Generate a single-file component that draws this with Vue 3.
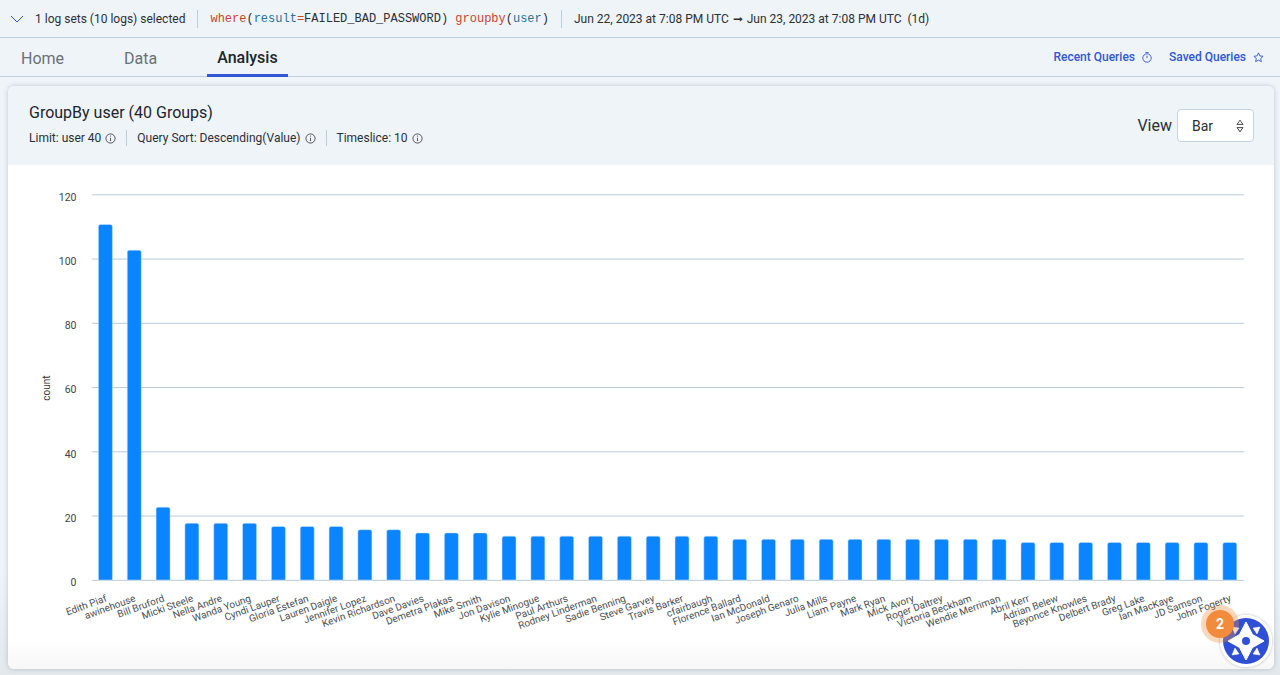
<template>
  <div class="page">
    <header class="query-bar">
      <svg class="chevron" width="14" height="8" viewBox="0 0 14 8"><path d="M1 1l6 6 6-6" fill="none" stroke="#3157d5" stroke-width="1" /></svg>
      <span class="selected">1 log sets (10 logs) selected</span>
      <span class="query"><span class="kw">where</span>(<span class="field">result</span><span class="kw">=</span>FAILED_BAD_PASSWORD) <span class="kw">groupby</span>(<span class="field">user</span>)</span>
      <span class="range">Jun 22, 2023 at 7:08 PM UTC <span class="arrow">➞</span> Jun 23, 2023 at 7:08 PM UTC&nbsp; (1d)</span>
    </header>

    <nav class="tabs">
      <a v-for="tab in tabs" :key="tab" class="tab" :class="{ active: tab === 'Analysis' }">{{ tab }}</a>
      <div class="links">
        <a class="link">
          Recent Queries
          <svg width="10" height="11" viewBox="0 0 10 11" fill="none" stroke="#3157d5" stroke-width="0.9">
            <circle cx="5" cy="6" r="4.2" />
            <path d="M3.4 0.6h3.2M5 3.6v2.6" />
          </svg>
        </a>
        <a class="link">
          Saved Queries
          <svg width="11" height="11" viewBox="0 0 11 11" fill="none" stroke="#3157d5" stroke-width="0.9">
            <path d="M5.5 0.9l1.4 3 3.2 0.4-2.4 2.2 0.7 3.2-2.9-1.6-2.9 1.6 0.7-3.2-2.4-2.2 3.2-0.4z" />
          </svg>
        </a>
      </div>
    </nav>

    <section class="card">
      <div class="card-head">
        <div>
          <h2 class="title">GroupBy user (40 Groups)</h2>
          <div class="meta">
            <span v-for="item in meta" :key="item" class="meta-item">
              {{ item }}
              <svg width="11" height="11" viewBox="0 0 11 11" fill="none" stroke="#333" stroke-width="0.8">
                <circle cx="5.500" cy="5.500" r="4.600" />
                <path d="M5.500 4.800v3.400M5.500 2.600v1.100" />
              </svg>
            </span>
          </div>
        </div>
        <div class="view">
          <span class="view-label">View</span>
          <div class="select">
            Bar
            <svg width="8" height="14" viewBox="0 0 8 14" fill="none" stroke="#333" stroke-width="0.9">
              <path d="M1 5.400L4 1.200l3 4.200zM1 8.600l3 4.200 3-4.200z" />
            </svg>
          </div>
        </div>
      </div>

      <div class="chart-wrap">
        <svg class="chart" width="1266" height="504" viewBox="8 165 1266 504">
          <g v-for="tick in ticks" :key="tick">
            <line x1="92" x2="1244" :y1="yFor(tick)" :y2="yFor(tick)" stroke="#b9cbdb" />
            <text class="axis" x="76.500" :y="yFor(tick) + 5.700" text-anchor="end">{{ tick }}</text>
          </g>
          <text class="axis-title" text-anchor="middle" transform="translate(50 388) rotate(-90)">count</text>
          <path v-for="bar in bars" :key="bar.name" :d="bar.d" fill="#0a84ff" stroke="#cfe4f8" stroke-width="0.5" />
          <text
            v-for="bar in bars"
            :key="bar.name + '-label'"
            class="tick-label"
            text-anchor="end"
            :transform="`translate(${bar.cx + 2} 601) rotate(-20)`"
          >{{ bar.name }}</text>
        </svg>
      </div>
    </section>

    <div class="fab">
      <svg width="46" height="46" viewBox="-23 -23 46 46">
        <circle r="23" fill="#2f50d6" />
        <path d="M0 -19L6.500 -6.500 18 0 6.500 6.500 0 19-6.500 6.500-18 0-6.500-6.500z" fill="#fff" stroke="#fff" stroke-linejoin="round" />
        <path d="M7 -13L14 -14 11 -7zM-7 -13L-14 -14 -11 -7zM7 13L14 14 11 7zM-7 13L-14 14 -11 7z" fill="#fff" stroke="#fff" stroke-width="0.5" stroke-linejoin="round" />
        <circle r="4" fill="#2f50d6" />
      </svg>
      <span class="badge">2</span>
    </div>
  </div>
</template>

<script setup>
import { computed } from 'vue'

const tabs = ['Home', 'Data', 'Analysis']
const meta = ['Limit: user 40', 'Query Sort: Descending(Value)', 'Timeslice: 10']
const ticks = [0, 20, 40, 60, 80, 100, 120]

const rows = [
  ['Edith Piaf', 111], ['awinehouse', 103], ['Bill Bruford', 23], ['Micki Steele', 18],
  ['Nella Andre', 18], ['Wanda Young', 18], ['Cyndi Lauper', 17], ['Gloria Estefan', 17],
  ['Lauren Daigle', 17], ['Jennifer Lopez', 16], ['Kevin Richardson', 16], ['Dave Davies', 15],
  ['Demetra Plakas', 15], ['Mike Smith', 15], ['Jon Davison', 14], ['Kylie Minogue', 14],
  ['Paul Arthurs', 14], ['Rodney Linderman', 14], ['Sadie Benning', 14], ['Steve Garvey', 14],
  ['Travis Barker', 14], ['cfairbaugh', 14], ['Florence Ballard', 13], ['Ian McDonald', 13],
  ['Joseph Genaro', 13], ['Julia Mills', 13], ['Liam Payne', 13], ['Mark Ryan', 13],
  ['Mick Avory', 13], ['Roger Daltrey', 13], ['Victoria Beckham', 13], ['Wendie Merriman', 13],
  ['Abril Kerr', 12], ['Adrian Belew', 12], ['Beyonce Knowles', 12], ['Delbert Brady', 12],
  ['Greg Lake', 12], ['Ian MacKaye', 12], ['JD Samson', 12], ['John Fogerty', 12]
]

const baseY = 580.3
const unit = 385.5 / 120
const band = 28.83
const yFor = (value) => baseY - value * unit

const bars = computed(() => rows.map(([name, value], i) => {
  const cx = 91 + band * (i + 0.5)
  const top = yFor(value) + 0.8
  const left = cx - 7
  const right = cx + 7
  return {
    name,
    cx,
    d: `M${left} 580V${top + 2}Q${left} ${top} ${left + 2} ${top}H${right - 2}Q${right} ${top} ${right} ${top + 2}V580z`
  }
}))
</script>

<style>
html, body {
  margin: 0;
  background: #eff4f9;
}
</style>

<style scoped>
.page {
  position: relative;
  height: 675px;
  overflow: hidden;
  background: linear-gradient(#eff4f9 85%, #e2e8ec);
  font-family: Roboto, sans-serif;
  color: #2b2f36;
}

.query-bar {
  display: flex;
  align-items: center;
  height: 37px;
  padding-left: 10px;
  border-bottom: 1px solid #bccfe0;
  font-size: 12px;
  box-sizing: content-box;
}

.chevron {
  margin-right: 11px;
}

.selected {
  padding-right: 12px;
  border-right: 1px solid #bccfe0;
  line-height: 18px;
}

.query {
  margin-left: 12px;
  padding-right: 12px;
  border-right: 1px solid #bccfe0;
  line-height: 18px;
  font-family: "Liberation Mono", monospace;
  white-space: pre;
}

.kw {
  color: #c8452b;
}

.field {
  color: #2a7296;
}

.range {
  margin-left: 12px;
}

.arrow {
  margin: 0 1px;
}

.tabs {
  display: flex;
  align-items: stretch;
  height: 38px;
  border-bottom: 1px solid #bccfe0;
}

.tab {
  display: flex;
  align-items: center;
  box-sizing: border-box;
  font-size: 16px;
  color: #6a7077;
  padding: 3px 0 0;
  margin-left: 21px;
  margin-right: 39px;
}

.tab.active {
  margin-left: 11px;
  margin-right: 0;
  padding: 3px 10px 0;
  color: #20252c;
  font-weight: 500;
  border-bottom: 3px solid #3157d5;
  height: 39px;
}

.links {
  display: flex;
  align-items: center;
  gap: 17px;
  margin-left: auto;
  padding-right: 16px;
}

.link {
  display: flex;
  align-items: center;
  gap: 7px;
  font-size: 12px;
  font-weight: 500;
  color: #3157d5;
}

.card {
  margin: 9px 6px 6px 8px;
  border-radius: 6px;
  overflow: hidden;
  box-shadow: 0 0 5px rgba(60, 80, 100, 0.28);
}

.card-head {
  display: flex;
  justify-content: space-between;
  height: 79px;
  padding: 17px 20px 0 21px;
  box-sizing: border-box;
  background: #eff4f9;
}

.title {
  margin: 0;
  font-size: 16px;
  font-weight: 400;
  line-height: 20px;
  color: #20252c;
}

.meta {
  display: flex;
  margin-top: 7px;
  font-size: 12px;
  line-height: 16px;
}

.meta-item {
  display: flex;
  align-items: center;
  gap: 4px;
  padding-right: 10px;
  margin-right: 10px;
  border-right: 1px solid #bccfe0;
}

.meta-item:last-child {
  border-right: 0;
}

.view {
  display: flex;
  align-items: center;
  gap: 5px;
  height: 33px;
  margin-top: 6px;
}

.view-label {
  font-size: 16px;
}

.select {
  display: flex;
  align-items: center;
  justify-content: space-between;
  width: 77px;
  height: 33px;
  padding: 0 9px 0 14px;
  box-sizing: border-box;
  background: #fff;
  border: 1px solid #c5d4e3;
  border-radius: 4px;
  font-size: 14px;
}

.chart-wrap {
  height: 504px;
  background: linear-gradient(#fff 94%, #f7f7f7);
}

.chart {
  display: block;
}

.axis {
  font-size: 10.5px;
  fill: #444;
}

.axis-title {
  font-size: 10px;
  fill: #333;
}

.tick-label {
  font-size: 10px;
  fill: #4a4f55;
}

.fab {
  position: absolute;
  left: 1220px;
  top: 615px;
  width: 46px;
  height: 46px;
  border: 3px solid #fff;
  border-radius: 50%;
  box-shadow: 0 0 3px rgba(0, 0, 0, 0.3);
}

.fab > svg {
  display: block;
}

.badge {
  position: absolute;
  left: -17px;
  top: -8px;
  width: 28px;
  height: 28px;
  border-radius: 50%;
  background: #f38b3c;
  box-shadow: 0 0 0 5px rgba(243, 139, 60, 0.35);
  color: #fff;
  font-size: 14px;
  font-weight: 700;
  line-height: 28px;
  text-align: center;
}
</style>
